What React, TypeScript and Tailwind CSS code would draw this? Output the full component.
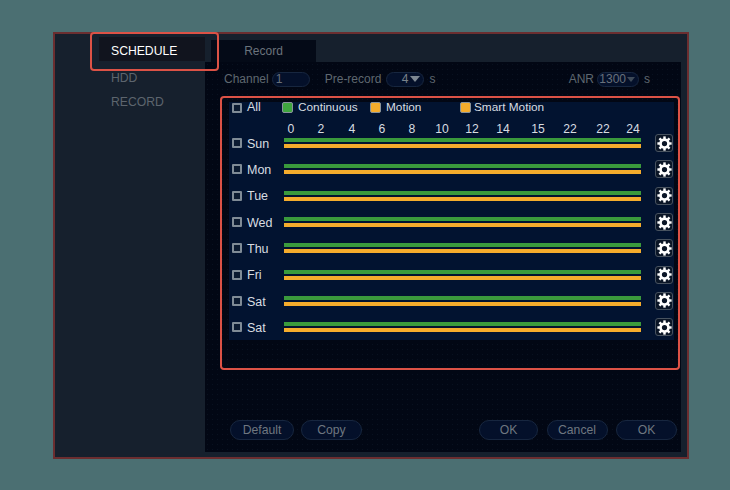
const days = ["Sun", "Mon", "Tue", "Wed", "Thu", "Fri", "Sat", "Sat"];
const hours = ["0", "2", "4", "6", "8", "10", "12", "14", "15", "22", "22", "24"];
const teeth = [0, 45, 90, 135, 180, 225, 270, 315];

function Check() {
  return <span className="block h-[10px] w-[10px] shrink-0 rounded-[1px] border-2 border-[#7f8b96] bg-[#0b1a30]" />;
}

function Gear() {
  return (
    <svg viewBox="0 0 16 16" className="h-[15px] w-[15px]">
      <circle cx="8" cy="8" r="4.2" fill="none" stroke="#fff" strokeWidth="2.8" />
      {teeth.map((angle) => (
        <rect key={angle} x="6.7" y="0.4" width="2.6" height="3" fill="#fff" transform={`rotate(${angle} 8 8)`} />
      ))}
    </svg>
  );
}

function PillButton({ label, width }: { label: string; width: string }) {
  return (
    <button
      className={`h-[20px] ${width} rounded-full border border-[#17263f] bg-[#04102a] text-[12.2px] leading-[18px] text-[#6f7780]`}
    >
      {label}
    </button>
  );
}

function Legend({ color, label, width, gap }: { color: string; label: string; width: string; gap: string }) {
  return (
    <div className={`flex ${width} ${gap} items-center`}>
      <span className={`h-[11px] w-[11px] rounded-[2px] border border-[#8a949c] ${color}`} />
      <span>{label}</span>
    </div>
  );
}

function DayRow({ day }: { day: string }) {
  return (
    <div className="flex h-[26.3px] items-center">
      <div className="ml-[3px] flex w-[52px] items-center gap-[5px] text-[12.5px]">
        <Check />
        <span className="pt-[2px]">{day}</span>
      </div>
      <div className="flex w-[357px] flex-col gap-[2px]">
        <div className="h-[4px] bg-[#3a9a3c]" />
        <div className="h-[4px] bg-[#f5ac2c]" />
      </div>
      <div className="ml-[14px] flex h-[18px] w-[18px] items-center justify-center rounded-[3px] border border-[#47525f] bg-[#0a1526]">
        <Gear />
      </div>
    </div>
  );
}

export default function App() {
  return (
    <div className="h-[490px] w-[730px] bg-[#4b6f72] pl-[53px] pt-[32px] font-['Liberation_Sans',Arial,sans-serif]">
      <div className="relative flex h-[427px] w-[636px] border-2 border-[#6b2e30] bg-[#16202d] pb-[5px] pr-[6px]">
        <div className="absolute left-[35px] top-[-2px] h-[39px] w-[129px] rounded-[4px] border-2 border-[#dc5246]" />

        <aside className="w-[150px] shrink-0 pt-[3px] text-[12.2px]">
          <div className="ml-[44px] flex h-[24px] items-center bg-[#11141e] pl-[12px] pt-[4px] text-white">SCHEDULE</div>
          <div className="ml-[56px] mt-[5px] leading-[24px] text-[#5d656e]">HDD</div>
          <div className="ml-[56px] leading-[24px] text-[#5d656e]">RECORD</div>
        </aside>

        <main className="flex min-w-0 flex-1 flex-col">
          <div className="flex h-[28px] shrink-0 items-end pl-[6px]">
            <div className="flex h-[22px] w-[105px] items-center justify-center bg-[#040a17] text-[12px] text-[#6b737c]">
              Record
            </div>
          </div>

          <div className="flex flex-1 flex-col bg-[#020714] bg-[radial-gradient(#081120_0.6px,transparent_0.7px)] bg-[length:5px_5px] pl-[15px]">
            <div className="flex h-[34px] shrink-0 items-center pl-[4px] pr-[31px] text-[12px] text-[#5f6770]">
              <span>Channel</span>
              <span className="ml-[3px] flex h-[15px] w-[38px] items-center rounded-full border border-[#17263f] bg-[#04102a] pl-[3px] text-[#69717a]">
                1
              </span>
              <span className="ml-[15px]">Pre-record</span>
              <span className="ml-[5px] flex h-[15px] w-[38px] items-center justify-end gap-[2px] rounded-full border border-[#17263f] bg-[#04102a] pr-[3px] text-[#7a828b]">
                4
                <span className="h-0 w-0 border-x-[5px] border-t-[6px] border-x-transparent border-t-[#7d8791]" />
              </span>
              <span className="ml-[5px]">s</span>
              <span className="ml-auto">ANR</span>
              <span className="ml-[3px] flex h-[15px] w-[42px] items-center justify-end gap-[1px] rounded-full border border-[#17263f] bg-[#04102a] pr-[3px] text-[#69717a]">
                1300
                <span className="h-0 w-0 border-x-[4px] border-t-[5px] border-x-transparent border-t-[#3e4a58]" />
              </span>
              <span className="ml-[5px]">s</span>
            </div>

            <section className="h-[274px] w-[460px] shrink-0 rounded-[4px] border-2 border-[#dc5246] pl-[7px] pt-[4px]">
              <div className="h-[238px] w-[445px] bg-[#021330] text-[11.8px] text-[#d8dde1]">
                <div className="flex h-[11px] items-center">
                  <div className="ml-[3px] flex w-[50px] items-center gap-[5px] text-[12.5px]">
                    <Check />
                    <span>All</span>
                  </div>
                  <Legend color="bg-[#3fa63f]" label="Continuous" width="w-[88px]" gap="gap-[5px]" />
                  <Legend color="bg-[#f5ac2c]" label="Motion" width="w-[90px]" gap="gap-[5px]" />
                  <Legend color="bg-[#f5ac2c]" label="Smart Motion" width="w-[100px]" gap="gap-[3px]" />
                </div>
                <div className="ml-[47px] grid h-[17px] grid-cols-[30px_30px_32px_28px_32px_28px_32px_30px_40px_24px_42px_18px] items-center pt-[7px] text-[12.2px]">
                  {hours.map((hour, index) => (
                    <span key={index} className="text-center">
                      {hour}
                    </span>
                  ))}
                </div>
                {days.map((day, index) => (
                  <DayRow key={index} day={day} />
                ))}
              </div>
            </section>

            <div className="mt-[50px] flex items-center pl-[10px] pr-[4px]">
              <PillButton label="Default" width="w-[64px]" />
              <div className="ml-[7px] flex">
                <PillButton label="Copy" width="w-[61px]" />
              </div>
              <div className="ml-auto flex gap-[8.5px]">
                <PillButton label="OK" width="w-[59px]" />
                <PillButton label="Cancel" width="w-[61px]" />
                <PillButton label="OK" width="w-[61px]" />
              </div>
            </div>
          </div>
        </main>
      </div>
    </div>
  );
}
